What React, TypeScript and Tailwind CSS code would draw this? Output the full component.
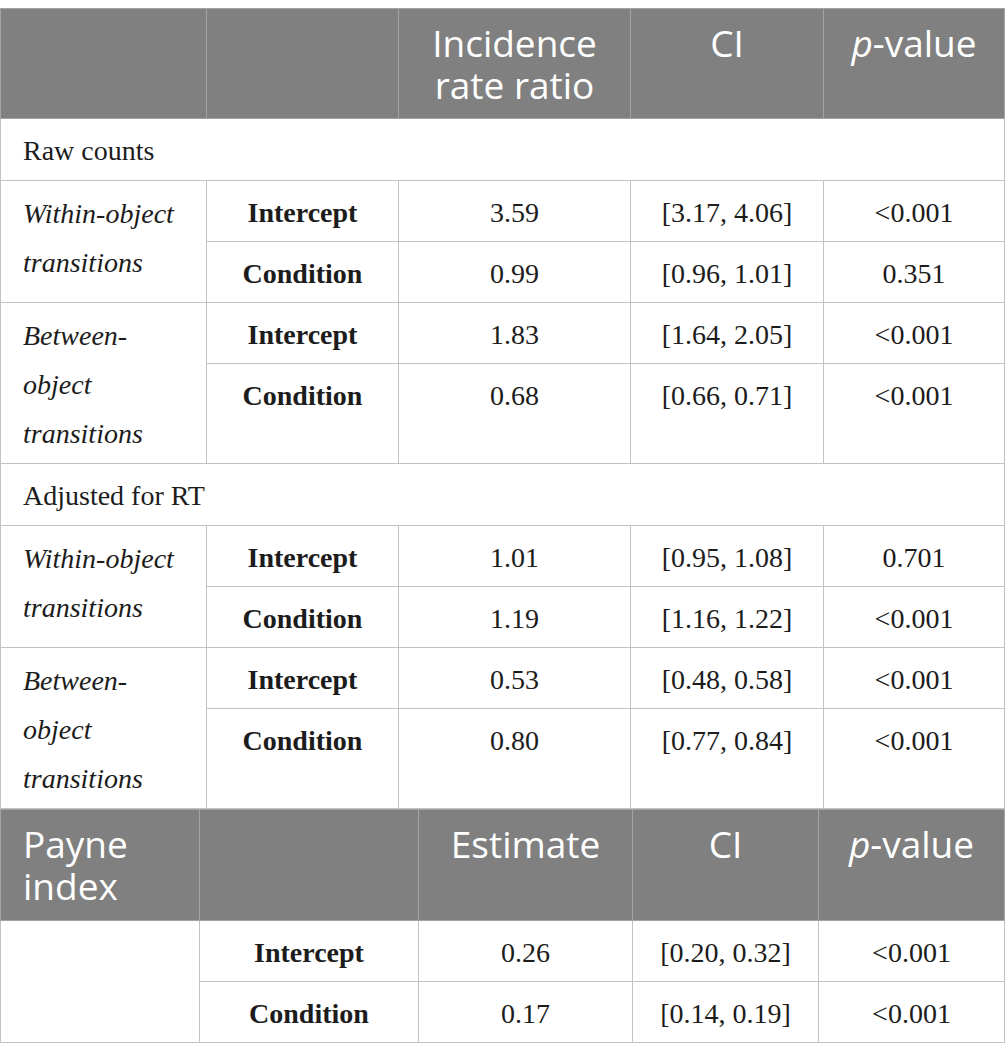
import React from 'react';

const serif = { fontFamily: '"Liberation Serif", "Times New Roman", serif' };

const headCell =
  'bg-[#808080] text-white text-[37px] leading-[42px] font-normal align-top pt-[13px] border border-[#a3a3a3]';
const cell = 'border border-[#c3c3c3] align-top pt-2 text-[28px] leading-[48px] text-[#1c1c1c]';

type Row = { term: string; est: string; ci: string; p: string };

const groups: { section: string; items: { label: string[]; tall: boolean; rows: Row[] }[] }[] = [
  {
    section: 'Raw counts',
    items: [
      {
        label: ['Within-object', 'transitions'],
        tall: false,
        rows: [
          { term: 'Intercept', est: '3.59', ci: '[3.17, 4.06]', p: '<0.001' },
          { term: 'Condition', est: '0.99', ci: '[0.96, 1.01]', p: '0.351' },
        ],
      },
      {
        label: ['Between-', 'object', 'transitions'],
        tall: true,
        rows: [
          { term: 'Intercept', est: '1.83', ci: '[1.64, 2.05]', p: '<0.001' },
          { term: 'Condition', est: '0.68', ci: '[0.66, 0.71]', p: '<0.001' },
        ],
      },
    ],
  },
  {
    section: 'Adjusted for RT',
    items: [
      {
        label: ['Within-object', 'transitions'],
        tall: false,
        rows: [
          { term: 'Intercept', est: '1.01', ci: '[0.95, 1.08]', p: '0.701' },
          { term: 'Condition', est: '1.19', ci: '[1.16, 1.22]', p: '<0.001' },
        ],
      },
      {
        label: ['Between-', 'object', 'transitions'],
        tall: true,
        rows: [
          { term: 'Intercept', est: '0.53', ci: '[0.48, 0.58]', p: '<0.001' },
          { term: 'Condition', est: '0.80', ci: '[0.77, 0.84]', p: '<0.001' },
        ],
      },
    ],
  },
];

const PValue = () => (
  <>
    <span className="italic">p</span>-value
  </>
);

export default function App() {
  return (
    <div className="bg-white w-[1005px] h-[1062px] pt-2" style={{ fontFamily: '"Open Sans", "Noto Sans", sans-serif' }}>
      <table className="table-fixed border-collapse w-[1004px]">
        <colgroup>
          <col className="w-[206px]" />
          <col className="w-[192px]" />
          <col className="w-[232px]" />
          <col className="w-[193px]" />
          <col className="w-[181px]" />
        </colgroup>
        <thead>
          <tr className="h-[110px]">
            <th className={headCell}></th>
            <th className={headCell}></th>
            <th className={`${headCell} text-center`}>
              Incidence
              <br />
              rate ratio
            </th>
            <th className={`${headCell} text-center`}>CI</th>
            <th className={`${headCell} text-center`}>
              <PValue />
            </th>
          </tr>
        </thead>
        <tbody style={serif}>
          {groups.map((g) => (
            <React.Fragment key={g.section}>
              <tr className="h-[62px]">
                <td colSpan={5} className={`${cell} pl-[22px] text-left`}>
                  {g.section}
                </td>
              </tr>
              {g.items.map((it, gi) =>
                it.rows.map((r, ri) => (
                  <tr key={`${g.section}-${gi}-${ri}`} className={it.tall && ri === 1 ? 'h-[100px]' : 'h-[61px]'}>
                    {ri === 0 && (
                      <td rowSpan={2} className={`${cell} pl-[22px] italic text-left leading-[49px]`}>
                        {it.label.map((l) => (
                          <div key={l}>{l}</div>
                        ))}
                      </td>
                    )}
                    <td className={`${cell} text-center font-bold`}>{r.term}</td>
                    <td className={`${cell} text-center`}>{r.est}</td>
                    <td className={`${cell} text-center`}>{r.ci}</td>
                    <td className={`${cell} text-center`}>{r.p}</td>
                  </tr>
                ))
              )}
            </React.Fragment>
          ))}
        </tbody>
      </table>

      <table className="table-fixed border-collapse w-[1004px]">
        <colgroup>
          <col className="w-[199px]" />
          <col className="w-[219px]" />
          <col className="w-[214px]" />
          <col className="w-[186px]" />
          <col className="w-[186px]" />
        </colgroup>
        <thead>
          <tr className="h-[111px]">
            <th className={`${headCell} text-left pl-[22px]`}>
              Payne
              <br />
              index
            </th>
            <th className={headCell}></th>
            <th className={`${headCell} text-center`}>Estimate</th>
            <th className={`${headCell} text-center`}>CI</th>
            <th className={`${headCell} text-center`}>
              <PValue />
            </th>
          </tr>
        </thead>
        <tbody style={serif}>
          <tr className="h-[61px]">
            <td rowSpan={2} className={cell}></td>
            <td className={`${cell} text-center font-bold`}>Intercept</td>
            <td className={`${cell} text-center`}>0.26</td>
            <td className={`${cell} text-center`}>[0.20, 0.32]</td>
            <td className={`${cell} text-center`}>&lt;0.001</td>
          </tr>
          <tr className="h-[61px]">
            <td className={`${cell} text-center font-bold`}>Condition</td>
            <td className={`${cell} text-center`}>0.17</td>
            <td className={`${cell} text-center`}>[0.14, 0.19]</td>
            <td className={`${cell} text-center`}>&lt;0.001</td>
          </tr>
        </tbody>
      </table>
    </div>
  );
}
